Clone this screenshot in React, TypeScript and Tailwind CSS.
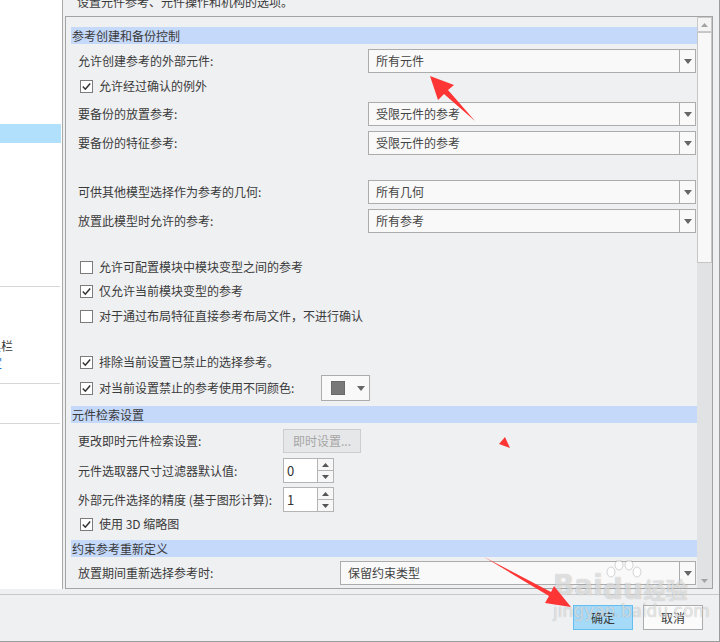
import React from 'react';

function Arrow({ className = '' }: { className?: string }) {
  return (
    <svg width="8" height="5" viewBox="0 0 8 5" className={className}>
      <path d="M0 0 H8 L4 5 Z" fill="#666" />
    </svg>
  );
}

function Dropdown({ value, className = '' }: { value: string; className?: string }) {
  return (
    <div className={`flex h-[24px] border border-[#acacac] bg-[#f9f9f9] ${className}`}>
      <span className="flex-1 pl-[7px] leading-[22px] text-[#444]">{value}</span>
      <div className="w-[16px] border-l border-[#acacac] flex items-center justify-center">
        <Arrow />
      </div>
    </div>
  );
}

function Check({ checked, label, className = '' }: { checked: boolean; label: string; className?: string }) {
  return (
    <div className={`flex items-center h-[24px] pl-[9px] ${className}`}>
      <div className="w-[13px] h-[13px] border border-[#7c7c7c] bg-white flex items-center justify-center">
        {checked && (
          <svg width="11" height="11" viewBox="0 0 11 11">
            <path d="M1.8 5.6 L4.3 8.2 L9.2 2.4" fill="none" stroke="#333" strokeWidth="1.5" />
          </svg>
        )}
      </div>
      <span className="ml-[6px]">{label}</span>
    </div>
  );
}

function Header({ title, className = '' }: { title: string; className?: string }) {
  return <div className={`h-[17px] bg-[#c5d9fb] pl-[1px] leading-[17px] ${className}`}>{title}</div>;
}

function Spinner({ value, className = '' }: { value: string; className?: string }) {
  return (
    <div className={`flex h-[25px] w-[51px] border border-[#b4b4b4] bg-white ${className}`}>
      <span className="flex-1 pl-[3px] leading-[23px] text-[13px] text-[#333]">{value}</span>
      <div className="w-[16px] border-l border-[#b4b4b4] flex flex-col bg-[#f7f7f7]">
        <div className="flex-1 flex items-center justify-center border-b border-[#b4b4b4]">
          <svg width="7" height="4" viewBox="0 0 7 4"><path d="M0 4 H7 L3.5 0 Z" fill="#555" /></svg>
        </div>
        <div className="flex-1 flex items-center justify-center">
          <svg width="7" height="4" viewBox="0 0 7 4"><path d="M0 0 H7 L3.5 4 Z" fill="#555" /></svg>
        </div>
      </div>
    </div>
  );
}

function LabelRow({ label, width, children, className = '' }: { label: string; width: string; children: React.ReactNode; className?: string }) {
  return (
    <div className={`flex items-center ${className}`}>
      <div className={`${width} pl-[7px] shrink-0`}>{label}</div>
      {children}
    </div>
  );
}

export default function App() {
  return (
    <div className="relative w-[720px] h-[642px] flex flex-col bg-[#eff0f2] border-r border-b border-[#9c9c9c] overflow-hidden text-[12px] text-[#3a3a3a] font-['Noto_Sans_CJK_SC',sans-serif]">
      {/* Top area */}
      <div className="flex h-[594px] shrink-0">
        {/* Sidebar */}
        <div className="w-[63px] h-[589px] bg-white border-r border-[#a9a9a9] flex flex-col overflow-hidden">
          <div className="h-[19px] mt-[124px] bg-[#b1e0fd] mr-[1px]" />
          <div className="h-[1px] w-[60px] bg-[#d6d6d6] mt-[143px]" />
          <div className="mt-[52px] h-[14px] leading-[14px] whitespace-nowrap -ml-[11px]">具栏</div>
          <div className="mt-[3px] h-[14px] leading-[14px] whitespace-nowrap -ml-[10px] text-[#1c6fd1]">定</div>
          <div className="h-[1px] w-[60px] bg-[#d6d6d6] mt-[13px]" />
          <div className="h-[1px] w-[60px] bg-[#d6d6d6] mt-[39px]" />
        </div>

        {/* Main column */}
        <div className="ml-[2px] w-[648px] flex flex-col">
          <div className="h-[16px] pl-[12px] overflow-hidden">
            <div className="leading-[12px] -translate-y-[4px]">设置元件参考、元件操作和机构的选项。</div>
          </div>
          <div className="h-[573px] border border-[#a3a3a3] flex">
            {/* Content */}
            <div className="flex-1 pl-[5px] pt-[10px] flex flex-col overflow-hidden">
              <Header title="参考创建和备份控制" />
              <LabelRow label="允许创建参考的外部元件:" width="w-[297px]" className="mt-[5px]">
                <Dropdown value="所有元件" className="flex-1 mr-[1px]" />
              </LabelRow>
              <Check checked label="允许经过确认的例外" className="mt-[1px]" />
              <LabelRow label="要备份的放置参考:" width="w-[297px]" className="mt-[4px]">
                <Dropdown value="受限元件的参考" className="flex-1 mr-[1px]" />
              </LabelRow>
              <LabelRow label="要备份的特征参考:" width="w-[297px]" className="mt-[5px]">
                <Dropdown value="受限元件的参考" className="flex-1 mr-[1px]" />
              </LabelRow>
              <LabelRow label="可供其他模型选择作为参考的几何:" width="w-[297px]" className="mt-[25px]">
                <Dropdown value="所有几何" className="flex-1 mr-[1px]" />
              </LabelRow>
              <LabelRow label="放置此模型时允许的参考:" width="w-[297px]" className="mt-[5px]">
                <Dropdown value="所有参考" className="flex-1 mr-[1px]" />
              </LabelRow>
              <Check checked={false} label="允许可配置模块中模块变型之间的参考" className="mt-[22px]" />
              <Check checked label="仅允许当前模块变型的参考" />
              <Check checked={false} label="对于通过布局特征直接参考布局文件，不进行确认" className="mt-[1px]" />
              <Check checked label="排除当前设置已禁止的选择参考。" className="mt-[22px]" />
              <div className="flex items-center h-[26px] mt-[1px]">
                <Check checked label="对当前设置禁止的参考使用不同颜色:" className="w-[250px]" />
                <div className="w-[49px] h-[26px] border border-[#acacac] bg-[#f9f9f9] flex items-center">
                  <div className="w-[14px] h-[14px] bg-[#787878] border border-[#6a6a6a] ml-[9px]" />
                  <Arrow className="ml-[12px]" />
                </div>
              </div>
              <Header title="元件检索设置" className="mt-[5px]" />
              <LabelRow label="更改即时元件检索设置:" width="w-[212px]" className="mt-[6px]">
                <div className="w-[78px] h-[24px] border border-[#cdcdcd] bg-[#e6e7e9] text-[#a6a6a6] flex items-center justify-center">
                  即时设置...
                </div>
              </LabelRow>
              <LabelRow label="元件选取器尺寸过滤器默认值:" width="w-[212px]" className="mt-[5px]">
                <Spinner value="0" />
              </LabelRow>
              <LabelRow label="外部元件选择的精度 (基于图形计算):" width="w-[212px]" className="mt-[4px]">
                <Spinner value="1" />
              </LabelRow>
              <Check checked label="使用 3D 缩略图" />
              <Header title="约束参考重新定义" className="mt-[4px]" />
              <LabelRow label="放置期间重新选择参考时:" width="w-[269px]" className="mt-[4px]">
                <Dropdown value="保留约束类型" className="flex-1 mr-[1px]" />
              </LabelRow>
            </div>

            {/* Scrollbar */}
            <div className="w-[15px] flex flex-col bg-[#e1e2e4]">
              <div className="h-[15px] border border-[#c9c9c9] bg-[#f4f4f4] flex items-center justify-center">
                <svg width="7" height="4" viewBox="0 0 7 4"><path d="M0 4 H7 L3.5 0 Z" fill="#a3a3a3" /></svg>
              </div>
              <div className="h-[231px] border border-[#c6c6c6] bg-[#f8f8f8]" />
              <div className="flex-1" />
              <div className="h-[15px] flex items-center justify-center">
                <svg width="7" height="4" viewBox="0 0 7 4"><path d="M0 0 H7 L3.5 4 Z" fill="#a3a3a3" /></svg>
              </div>
            </div>
          </div>
        </div>
      </div>

      {/* Bottom bar */}
      <div className="flex-1 border-t border-[#c9c9c9] flex justify-end items-start pt-[10px] pr-[16px] gap-[10px]">
        <div className="w-[60px] h-[25px] border border-[#66bdf0] bg-[#a6daf9] flex items-center justify-center">确定</div>
        <div className="w-[60px] h-[25px] border border-[#acacac] bg-[#fbfbfb] flex items-center justify-center">取消</div>
      </div>

      {/* Baidu watermark */}
      <div className="absolute left-[553px] top-[560px] pointer-events-none text-white/60 [text-shadow:0_0_1px_rgba(0,0,0,0.3)]">
        <div className="flex items-end">
          <span className="text-[28px] leading-[28px] font-bold font-['DejaVu_Sans',sans-serif]">Bai</span>
          <div className="flex flex-col items-center">
            <svg width="40" height="22" viewBox="0 0 40 22" className="mb-[-2px]">
              <g fill="rgba(255,255,255,0.6)" stroke="rgba(0,0,0,0.2)" strokeWidth="0.8">
                <ellipse cx="8" cy="12" rx="4" ry="5" />
                <ellipse cx="16" cy="5" rx="4" ry="5" />
                <ellipse cx="26" cy="5" rx="4" ry="5" />
                <ellipse cx="34" cy="12" rx="4" ry="5" />
              </g>
            </svg>
            <span className="text-[28px] leading-[20px] font-bold font-['DejaVu_Sans',sans-serif]">du</span>
          </div>
          <span className="text-[22px] leading-[24px] font-bold ml-[1px]">经验</span>
        </div>
        <div className="text-[17px] leading-[20px] mt-[1px] font-['DejaVu_Sans',sans-serif]">jingyan.baidu.com</div>
      </div>

      {/* Red annotation arrows */}
      <svg className="absolute inset-0 pointer-events-none" width="720" height="642" viewBox="0 0 720 642">
        <g fill="#fe3535">
          <path d="M430 76 L454 85 L448 90 L475 121 L444 94 L438 100 Z" />
          <path d="M484 557 L551 592 L554 586 L571 607 L545 603 L549 596 Z" />
          <path d="M505 437 L499 444 L510 448 Z" />
        </g>
      </svg>
    </div>
  );
}
